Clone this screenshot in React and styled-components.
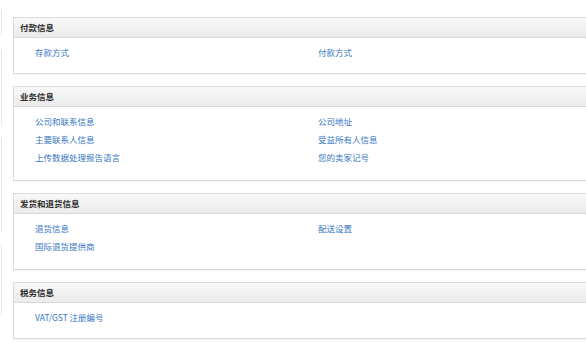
import React from "react";
import styled, { createGlobalStyle } from "styled-components";

const Global = createGlobalStyle`
  html, body { margin: 0; padding: 0; background: #fff; }
  body { font-family: "Noto Sans CJK SC", "Open Sans", sans-serif; overflow: hidden; }
`;

const Page = styled.div`
  display: flex;
  width: 586px;
  height: 354px;
  overflow: hidden;
  background: #fff;
`;

const Sidebar = styled.div`
  flex: 0 0 2px;
  display: flex;
  flex-direction: column;
  padding-top: 10px;
`;

const SideBox = styled.div`
  height: ${(p) => p.$h}px;
  margin-bottom: ${(p) => p.$gap}px;
  border-right: 1px solid #e6e6e6;
  box-sizing: border-box;
`;

const Main = styled.div`
  flex: 0 0 auto;
  width: 640px;
  padding: 17px 0 0 11px;
  display: flex;
  flex-direction: column;
  gap: 12px;
`;

const Panel = styled.section`
  border: 1px solid #dcdcdc;
  border-right: none;
  background: #fff;
  box-shadow: 0 1px 1px rgba(0, 0, 0, 0.04);
`;

const Header = styled.div`
  height: 19px;
  line-height: 19px;
  padding-left: 6px;
  background: linear-gradient(#f8f8f8, #ebebeb);
  border-bottom: 1px solid #d9d9d9;
  font-size: 8.5px;
  font-weight: 700;
  color: #2b2b2b;
`;

const Body = styled.div`
  display: grid;
  grid-template-columns: 283px 1fr;
  padding: 6px 0 ${(p) => p.$pb}px 21px;
`;

const Col = styled.div`
  display: flex;
  flex-direction: column;
`;

const Link = styled.a`
  display: block;
  height: 18px;
  line-height: 17px;
  font-size: 8.5px;
  color: #3676c4;
  text-decoration: none;
  white-space: nowrap;
`;

const sections = [
  { title: "付款信息", left: ["存款方式"], right: ["付款方式"], pb: 11 },
  {
    title: "业务信息",
    left: ["公司和联系信息", "主要联系人信息", "上传数据处理报告语言"],
    right: ["公司地址", "受益所有人信息", "您的卖家记号"],
    pb: 13,
  },
  { title: "发货和退货信息", left: ["退货信息", "国际退货提供商"], right: ["配送设置"], pb: 13 },
  { title: "税务信息", left: ["VAT/GST 注册编号"], right: [], pb: 11 },
];

export default function App() {
  return (
    <Page>
      <Global />
      <Sidebar>
        <SideBox $h={25} $gap={15} />
        <SideBox $h={75} $gap={13} />
        <SideBox $h={94} $gap={13} />
        <SideBox $h={70} $gap={0} />
      </Sidebar>
      <Main>
        {sections.map((s) => (
          <Panel key={s.title}>
            <Header>{s.title}</Header>
            <Body $pb={s.pb}>
              <Col>
                {s.left.map((l) => (
                  <Link key={l} href="#">{l}</Link>
                ))}
              </Col>
              <Col>
                {s.right.map((l) => (
                  <Link key={l} href="#">{l}</Link>
                ))}
              </Col>
            </Body>
          </Panel>
        ))}
      </Main>
    </Page>
  );
}
